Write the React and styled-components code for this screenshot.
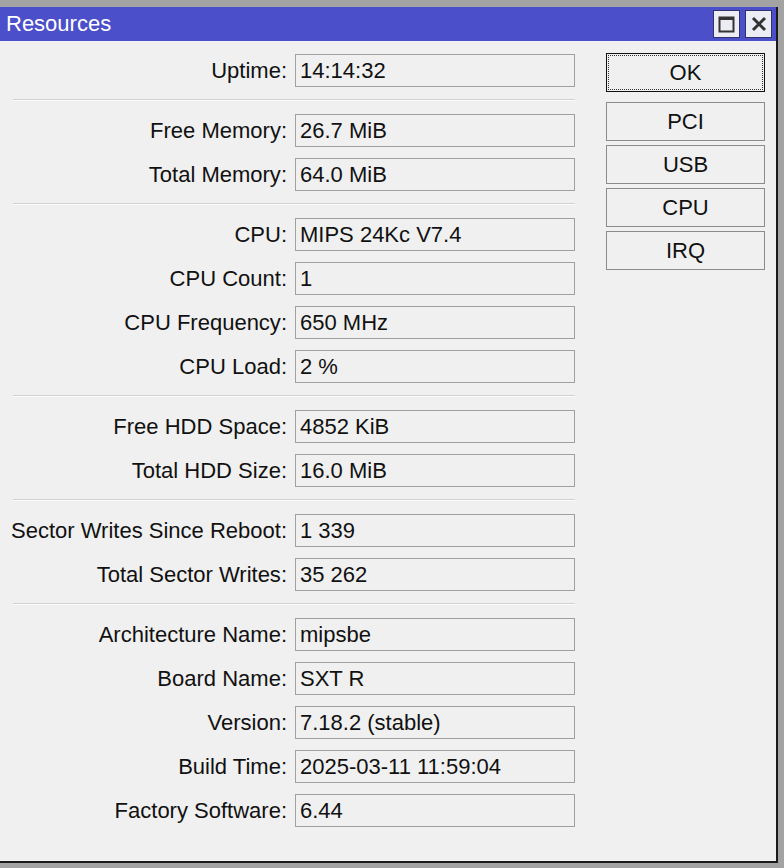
import React from "react";
import styled, { createGlobalStyle } from "styled-components";

const GlobalStyle = createGlobalStyle`
  html, body {
    margin: 0;
    padding: 0;
    background: #a3a3a3;
    font-family: "Liberation Sans", Arial, sans-serif;
  }
`;

const Desktop = styled.div`
  width: 784px;
  height: 868px;
  padding-top: 7px;
  box-sizing: border-box;
  position: relative;
  overflow: hidden;
`;

const Window = styled.div`
  width: 778px;
  height: 856px;
  box-sizing: border-box;
  background: #f0f0f0;
  border-right: 2px solid #1a1a1a;
  border-bottom: 2px solid #1a1a1a;
  display: flex;
  flex-direction: column;
`;

const TitleBar = styled.div`
  height: 34px;
  background: #4b4fc9;
  display: flex;
  align-items: center;
  justify-content: space-between;
  padding: 0 4px 0 6px;
  flex-shrink: 0;
`;

const Title = styled.span`
  color: #ffffff;
  font-size: 22px;
`;

const TitleButtons = styled.div`
  display: flex;
  gap: 5px;
`;

const TitleButton = styled.div`
  width: 27px;
  height: 28px;
  box-sizing: border-box;
  background: #ececf4;
  border: 1px solid #30306a;
  display: flex;
  align-items: center;
  justify-content: center;
`;

const Body = styled.div`
  display: flex;
  padding: 13px 0 0 13px;
`;

const Form = styled.div`
  width: 562px;
  display: grid;
  grid-template-columns: minmax(0, 1fr) 280px;
  column-gap: 8px;
  row-gap: 11px;
  align-items: center;
`;

const Label = styled.div`
  display: flex;
  justify-content: flex-end;
  font-size: 22px;
  color: #111;
  white-space: nowrap;
`;

const Field = styled.div`
  height: 33px;
  box-sizing: border-box;
  border: 1px solid #a0a0a0;
  background: #f0f0f0;
  font-size: 22px;
  color: #111;
  padding-left: 4px;
  display: flex;
  align-items: center;
`;

const Separator = styled.div`
  grid-column: 1 / -1;
  height: 2px;
  background: #d2d2d2;
  border-bottom: 1px solid #fbfbfb;
  box-sizing: border-box;
  margin: 1px 0 2px;
`;

const Buttons = styled.div`
  margin-left: 31px;
  margin-top: -1px;
  display: flex;
  flex-direction: column;
  gap: 4px;
  width: 159px;
`;

const Button = styled.button`
  height: 39px;
  margin-bottom: ${(p) => (p.$primary ? "6px" : "0")};
  box-sizing: border-box;
  background: #f0f0f0;
  border: 1px solid ${(p) => (p.$primary ? "#111" : "#8c8c8c")};
  outline: ${(p) => (p.$primary ? "1px dotted #333" : "none")};
  outline-offset: -3px;
  font-family: "Liberation Sans", Arial, sans-serif;
  font-size: 22px;
  color: #111;
  padding: 0;
`;

const groups = [
  [["Uptime", "14:14:32"]],
  [
    ["Free Memory", "26.7 MiB"],
    ["Total Memory", "64.0 MiB"],
  ],
  [
    ["CPU", "MIPS 24Kc V7.4"],
    ["CPU Count", "1"],
    ["CPU Frequency", "650 MHz"],
    ["CPU Load", "2 %"],
  ],
  [
    ["Free HDD Space", "4852 KiB"],
    ["Total HDD Size", "16.0 MiB"],
  ],
  [
    ["Sector Writes Since Reboot", "1 339"],
    ["Total Sector Writes", "35 262"],
  ],
  [
    ["Architecture Name", "mipsbe"],
    ["Board Name", "SXT R"],
    ["Version", "7.18.2 (stable)"],
    ["Build Time", "2025-03-11 11:59:04"],
    ["Factory Software", "6.44"],
  ],
];

function App() {
  return (
    <>
      <GlobalStyle />
      <Desktop>
        <Window>
          <TitleBar>
            <Title>Resources</Title>
            <TitleButtons>
              <TitleButton>
                <svg width="17" height="17" viewBox="0 0 17 17">
                  <rect x="1.5" y="1.5" width="14" height="14" fill="none" stroke="#333" strokeWidth="2" />
                  <rect x="1" y="1" width="15" height="3" fill="#333" />
                </svg>
              </TitleButton>
              <TitleButton>
                <svg width="16" height="16" viewBox="0 0 16 16">
                  <path d="M2 2 L14 14 M14 2 L2 14" stroke="#333" strokeWidth="3" />
                </svg>
              </TitleButton>
            </TitleButtons>
          </TitleBar>
          <Body>
            <Form>
              {groups.map((g, gi) => (
                <React.Fragment key={gi}>
                  {gi > 0 && <Separator />}
                  {g.map(([label, value]) => (
                    <React.Fragment key={label}>
                      <Label>{label}:</Label>
                      <Field>{value}</Field>
                    </React.Fragment>
                  ))}
                </React.Fragment>
              ))}
            </Form>
            <Buttons>
              <Button $primary>OK</Button>
              <Button>PCI</Button>
              <Button>USB</Button>
              <Button>CPU</Button>
              <Button>IRQ</Button>
            </Buttons>
          </Body>
        </Window>
      </Desktop>
    </>
  );
}

export default App;
